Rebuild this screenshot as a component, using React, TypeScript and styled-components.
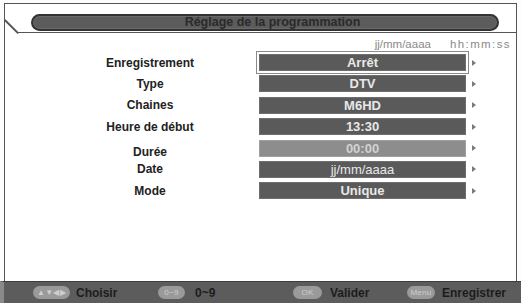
import React from "react";
import styled, { createGlobalStyle } from "styled-components";

const Global = createGlobalStyle`
  html, body { margin: 0; padding: 0; background: #fdfdfd; }
  body { font-family: "Liberation Sans", Arial, sans-serif; }
  #root { width: 521px; height: 303px; overflow: hidden; }
`;

const Screen = styled.div`
  width: 521px;
  height: 303px;
  display: flex;
  flex-direction: column;
  padding-top: 3px;
  box-sizing: border-box;
`;

const Frame = styled.div`
  margin: 0 4px 0 4px;
  height: 278px;
  border: 1.5px solid #555;
  border-bottom: none;
  background: #fff;
  display: flex;
  flex-direction: column;
  box-sizing: border-box;
`;

const Header = styled.div`
  position: relative;
  height: 29px;
  flex: none;
  display: flex;
  padding: 9.5px 17px 0 26px;
  box-sizing: border-box;
  &::after {
    content: "";
    position: absolute;
    left: 13px;
    right: 0;
    bottom: 0;
    height: 1.5px;
    background: #555;
  }
  &::before {
    content: "";
    position: absolute;
    left: 0;
    top: 15px;
    width: 19px;
    height: 1.5px;
    background: #555;
    transform-origin: 0 50%;
    transform: rotate(45deg);
  }
`;

const TitlePill = styled.div`
  flex: 1;
  height: 17px;
  border: 2px solid #333;
  border-radius: 10px;
  background: #5c5c5c;
  box-shadow: inset 0 0 0 1px #6a6a6a;
  display: flex;
  align-items: center;
  justify-content: center;
  padding-left: 15px;
  box-sizing: border-box;
  font-size: 12.5px;
  font-weight: bold;
  color: #2a2a2a;
`;

const FormatLine = styled.div`
  display: flex;
  justify-content: flex-end;
  gap: 19px;
  padding: 4px 5px 0 0;
  height: 15px;
  font-size: 11.5px;
  color: #8a8a8a;
  line-height: 15px;
`;

const FormatText = styled.span<{ $spaced?: boolean }>`
  letter-spacing: ${(p) => (p.$spaced ? "1.4px" : "0")};
`;

const Rows = styled.div`
  display: flex;
  flex-direction: column;
  gap: 4.4px;
  padding: 2px 0 0 90px;
`;

const Row = styled.div`
  display: flex;
  align-items: center;
  height: 17px;
`;

const Label = styled.div<{ $shift?: number }>`
  width: 110px;
  text-align: center;
  font-size: 12px;
  font-weight: bold;
  color: #222;
  padding-top: ${(p) => p.$shift ?? 0}px;
`;

const Box = styled.div<{ $selected?: boolean; $dim?: boolean; $light?: boolean }>`
  margin-left: 54px;
  width: 207px;
  height: 17px;
  background: ${(p) => (p.$dim ? "#8d8d8d" : "#5a5a5a")};
  border: 1px solid ${(p) => (p.$dim ? "#a0a0a0" : "#6e6e6e")};
  box-sizing: border-box;
  box-shadow: ${(p) => (p.$selected ? "0 0 0 2px #fff, 0 0 0 3px #8a8a8a" : "none")};
  display: flex;
  align-items: center;
  justify-content: center;
  font-size: 13px;
  font-weight: ${(p) => (p.$light ? "normal" : "bold")};
  color: ${(p) => (p.$dim ? "#d2d2d2" : "#e8e8e8")};
`;

const Arrow = styled.div`
  margin-left: 6px;
  width: 0;
  height: 0;
  border-top: 3px solid transparent;
  border-bottom: 3px solid transparent;
  border-left: 4px solid #7a7a7a;
`;

const Footer = styled.div`
  flex: none;
  height: 22px;
  background: #5c5c5c;
  border-top: 1px solid #3c3c3c;
  border-left: 4px solid #8a8a8a;
  box-sizing: border-box;
  display: grid;
  grid-template-columns: 125px 135px 114px auto;
  align-items: center;
  padding-left: 29px;
`;

const Hint = styled.div<{ $gap?: number }>`
  display: flex;
  align-items: center;
  gap: ${(p) => p.$gap ?? 7}px;
`;

const Key = styled.span<{ $w: number }>`
  width: ${(p) => p.$w}px;
  height: 13px;
  border-radius: 7px;
  background: #9a9a9a;
  color: #cfcfcf;
  font-size: 8px;
  line-height: 13px;
  text-align: center;
  letter-spacing: 0.3px;
`;

const HintText = styled.span`
  font-size: 12px;
  font-weight: bold;
  color: #1c1c1c;
`;

type Item = {
  label: string;
  value: string;
  selected?: boolean;
  dim?: boolean;
  light?: boolean;
  shift?: number;
};

const items: Item[] = [
  { label: "Enregistrement", value: "Arrêt", selected: true },
  { label: "Type", value: "DTV" },
  { label: "Chaines", value: "M6HD" },
  { label: "Heure de début", value: "13:30" },
  { label: "Durée", value: "00:00", dim: true, shift: 8 },
  { label: "Date", value: "jj/mm/aaaa", light: true },
  { label: "Mode", value: "Unique" },
];

export default function App() {
  return (
    <>
      <Global />
      <Screen>
        <Frame>
          <Header>
            <TitlePill>Réglage de la programmation</TitlePill>
          </Header>
          <FormatLine>
            <FormatText>jj/mm/aaaa</FormatText>
            <FormatText $spaced>hh:mm:ss</FormatText>
          </FormatLine>
          <Rows>
            {items.map((it) => (
              <Row key={it.label}>
                <Label $shift={it.shift}>{it.label}</Label>
                <Box $selected={it.selected} $dim={it.dim} $light={it.light}>
                  {it.value}
                </Box>
                <Arrow />
              </Row>
            ))}
          </Rows>
        </Frame>
        <Footer>
          <Hint $gap={6}>
            <Key $w={37}>▲▼◀▶</Key>
            <HintText>Choisir</HintText>
          </Hint>
          <Hint $gap={10}>
            <Key $w={27}>0~9</Key>
            <HintText>0~9</HintText>
          </Hint>
          <Hint $gap={8}>
            <Key $w={29}>OK</Key>
            <HintText>Valider</HintText>
          </Hint>
          <Hint $gap={7}>
            <Key $w={28}>Menu</Key>
            <HintText>Enregistrer</HintText>
          </Hint>
        </Footer>
      </Screen>
    </>
  );
}
